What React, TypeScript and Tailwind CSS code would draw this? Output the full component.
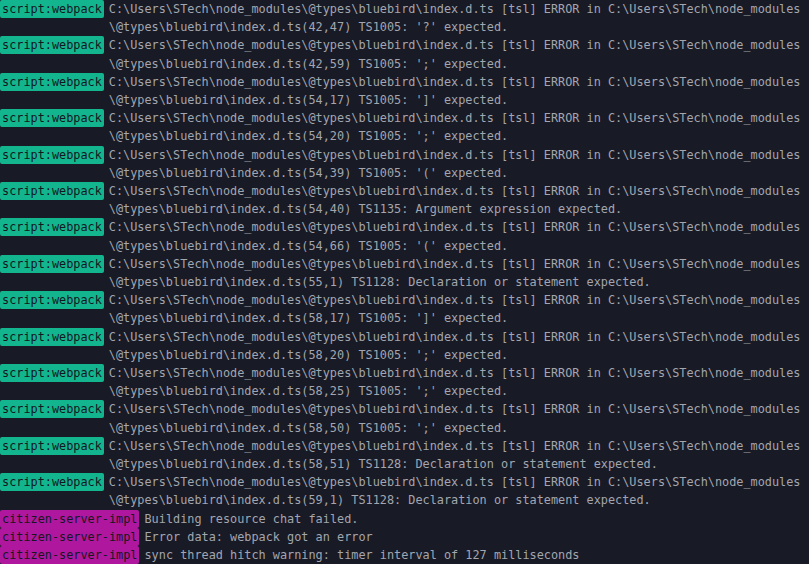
import React from 'react';

type Entry = { tag: 'webpack' | 'citizen'; lines: string[] };

const PATH = 'C:\\Users\\STech\\node_modules\\@types\\bluebird\\index.d.ts [tsl] ERROR in C:\\Users\\STech\\node_modules';

const tsErr = (pos: string, msg: string): Entry => ({
  tag: 'webpack',
  lines: [PATH, `\\@types\\bluebird\\index.d.ts(${pos}) ${msg}`],
});

const entries: Entry[] = [
  tsErr('42,47', "TS1005: '?' expected."),
  tsErr('42,59', "TS1005: ';' expected."),
  tsErr('54,17', "TS1005: ']' expected."),
  tsErr('54,20', "TS1005: ';' expected."),
  tsErr('54,39', "TS1005: '(' expected."),
  tsErr('54,40', 'TS1135: Argument expression expected.'),
  tsErr('54,66', "TS1005: '(' expected."),
  tsErr('55,1', 'TS1128: Declaration or statement expected.'),
  tsErr('58,17', "TS1005: ']' expected."),
  tsErr('58,20', "TS1005: ';' expected."),
  tsErr('58,25', "TS1005: ';' expected."),
  tsErr('58,50', "TS1005: ';' expected."),
  tsErr('58,51', 'TS1128: Declaration or statement expected.'),
  tsErr('59,1', 'TS1128: Declaration or statement expected.'),
  { tag: 'citizen', lines: ['Building resource chat failed.'] },
  { tag: 'citizen', lines: ['Error data: webpack got an error'] },
  { tag: 'citizen', lines: ['sync thread hitch warning: timer interval of 127 milliseconds'] },
];

export default function App() {
  return (
    <div
      className="w-[809px] h-[564px] overflow-hidden bg-[#181a26] text-[#a3a6ae] text-[11.85px] leading-[18.2px]"
      style={{ fontFamily: '"DejaVu Sans Mono", "Liberation Mono", monospace' }}
    >
      {entries.map((e, i) => (
        <div key={i} className="flex items-start">
          {e.tag === 'webpack' ? (
            <span className="shrink-0 h-[18px] px-[2px] rounded-[2px] bg-[#13b58e] text-[#15171f] mr-[5px]">
              script:webpack
            </span>
          ) : (
            <span className="shrink-0 h-[18px] px-[2px] rounded-[2px] bg-[#b0179f] text-[#15171f] mr-[5px]">
              citizen-server-impl
            </span>
          )}
          <div className="flex flex-col whitespace-pre">
            {e.lines.map((l, j) => (
              <span key={j}>{l}</span>
            ))}
          </div>
        </div>
      ))}
    </div>
  );
}
